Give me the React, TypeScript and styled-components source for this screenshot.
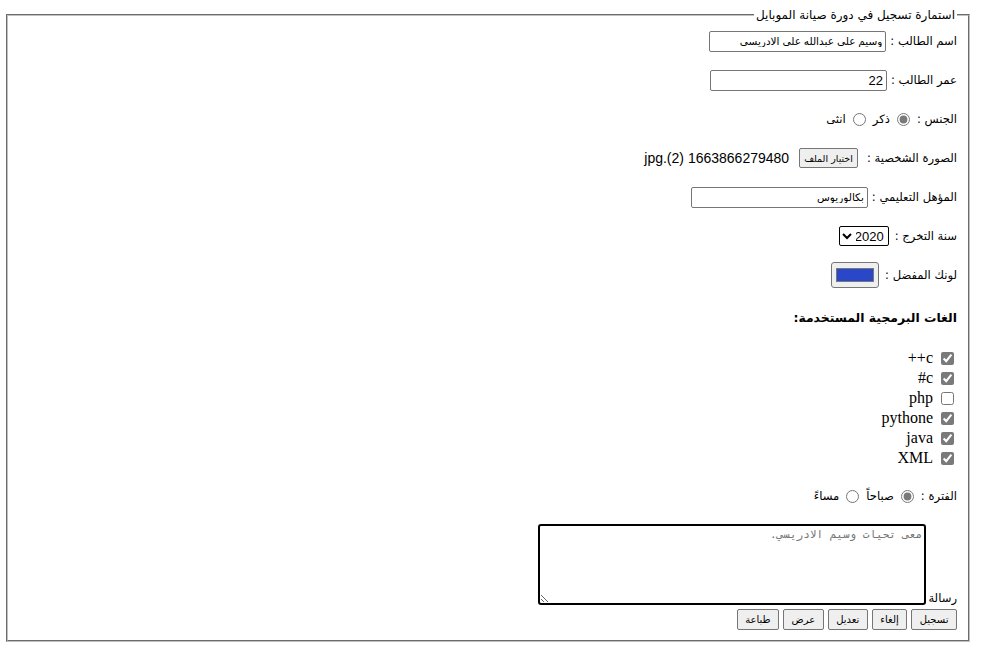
import React from "react";
import styled, { createGlobalStyle } from "styled-components";

const Global = createGlobalStyle`
  html, body { margin: 0; padding: 0; background: #fff; }
  body { font-family: "Liberation Sans", "DejaVu Sans", sans-serif; color: #000; }
`;

const Frame = styled.fieldset`
  direction: rtl;
  margin: 7px 12px 0 6px;
  padding: 7px 11px 10px 12px;
  border: 2px groove #c0c0c0;
  min-width: 0;
`;

const Legend = styled.legend`
  font-family: "DejaVu Sans", sans-serif;
  font-size: 12px;
  line-height: 16px;
  padding: 0 2px;
`;

const Form = styled.div`
  display: flex;
  flex-direction: column;
  gap: 17px;
`;

const Row = styled.div`
  display: flex;
  align-items: center;
  height: 22px;
  gap: 4px;
  font-size: 13px;
  white-space: nowrap;
`;

const Label = styled.span`
  font-family: "DejaVu Sans", sans-serif;
  font-size: 11.6px;
`;

const TextInput = styled.input<{ $small?: boolean }>`
  width: 177px;
  height: 21px;
  box-sizing: border-box;
  border: 1px solid #767676;
  border-radius: 2px;
  padding: 1px 3px;
  direction: rtl;
  font-family: "Liberation Sans", "DejaVu Sans", sans-serif;
  font-size: ${(p) => (p.$small ? 10.5 : 13)}px;
  color: #000;
  background: #fff;
`;

const Radio = styled.input.attrs({ type: "radio" })`
  width: 13px;
  height: 13px;
  margin: 0 3px;
  accent-color: #7a7a7a;
`;

const FakeButton = styled.button`
  height: 20px;
  box-sizing: border-box;
  padding: 0 4px;
  margin-right: 5px;
  border: 1px solid #767676;
  border-radius: 2px;
  background: #efefef;
  font-family: "DejaVu Sans", sans-serif;
  font-size: 9.5px;
  color: #000;
`;

const FileName = styled.span`
  font-size: 14px;
  margin-right: 6px;
`;

const Select = styled.select`
  width: 50px;
  height: 20px;
  margin-right: 2px;
  font-family: "Liberation Sans", sans-serif;
  font-size: 13px;
  border: 1px solid #000;
  border-radius: 2px;
  background: #fff;
  color: #000;
`;

const ColorInput = styled.input.attrs({ type: "color" })`
  width: 48px;
  height: 26px;
  margin-right: 2px;
  box-sizing: border-box;
  padding: 1px 2px;
  border: 1px solid #767676;
  border-radius: 3px;
  background: #efefef;
`;

const Heading = styled.h4`
  margin: 0;
  height: 28px;
  display: flex;
  align-items: center;
  font-family: "DejaVu Sans", sans-serif;
  font-size: 12.4px;
  font-weight: bold;
`;

const CheckList = styled.div`
  display: flex;
  flex-direction: column;
`;

const CheckRow = styled.label`
  display: flex;
  align-items: center;
  height: 20px;
  gap: 8px;
  font-family: "Liberation Serif", serif;
  font-size: 16px;
  padding-right: 3px;
`;

const Check = styled.input.attrs({ type: "checkbox" })`
  width: 13px;
  height: 13px;
  margin: 0;
  accent-color: #7a7a7a;
`;

const MessageBlock = styled.div`
  display: flex;
  flex-direction: column;
  gap: 4px;
`;

const MessageRow = styled.div`
  display: flex;
  align-items: flex-end;
  gap: 2px;
`;

const TextArea = styled.textarea`
  width: 388px;
  height: 81px;
  box-sizing: border-box;
  border: 2px solid #000;
  border-radius: 3px;
  padding: 2px;
  direction: rtl;
  font-family: "DejaVu Sans Mono", monospace;
  font-size: 11px;
  outline: none;
  &::placeholder { color: #757575; }
`;

const Actions = styled.div`
  display: flex;
  gap: 4px;
`;

const ActionButton = styled.button`
  height: 21px;
  box-sizing: border-box;
  padding: 0 7.5px;
  border: 1px solid #767676;
  border-radius: 2px;
  background: #efefef;
  font-family: "DejaVu Sans", sans-serif;
  font-size: 10px;
  color: #000;
`;

const languages = [
  { name: "c++", checked: true },
  { name: "c#", checked: true },
  { name: "php", checked: false },
  { name: "pythone", checked: true },
  { name: "java", checked: true },
  { name: "XML", checked: true },
];

export default function App() {
  return (
    <>
      <Global />
      <Frame>
        <Legend>استمارة تسجيل في دورة صيانة الموبايل</Legend>
        <Form>
          <Row>
            <Label>اسم الطالب :</Label>
            <TextInput $small defaultValue="وسيم علي عبدالله علي الادريسي" />
          </Row>
          <Row>
            <Label>عمر الطالب :</Label>
            <TextInput defaultValue="22" />
          </Row>
          <Row>
            <Label>الجنس :</Label>
            <Radio name="g" defaultChecked />
            <Label>ذكر</Label>
            <Radio name="g" />
            <Label>انثى</Label>
          </Row>
          <Row>
            <Label>الصورة الشخصية :</Label>
            <FakeButton type="button">اختيار الملف</FakeButton>
            <FileName>1663866279480 (2).jpg</FileName>
          </Row>
          <Row>
            <Label>المؤهل التعليمي :</Label>
            <TextInput $small defaultValue="بكالوريوس" />
          </Row>
          <Row>
            <Label>سنة التخرج :</Label>
            <Select defaultValue="2020">
              <option>2019</option>
              <option>2020</option>
              <option>2021</option>
            </Select>
          </Row>
          <Row>
            <Label>لونك المفضل :</Label>
            <ColorInput defaultValue="#2b47c9" />
          </Row>
          <Heading>الغات البرمجية المستخدمة:</Heading>
          <CheckList>
            {languages.map((l) => (
              <CheckRow key={l.name}>
                <Check defaultChecked={l.checked} />
                <span>{l.name}</span>
              </CheckRow>
            ))}
          </CheckList>
          <Row>
            <Label>الفترة :</Label>
            <Radio name="p" defaultChecked />
            <Label>صباحاً</Label>
            <Radio name="p" />
            <Label>مساءً</Label>
          </Row>
          <MessageBlock>
            <MessageRow>
              <Label>رسالة</Label>
              <TextArea placeholder="معى تحيات وسيم الادريسي." />
            </MessageRow>
            <Actions>
              <ActionButton type="button">تسجيل</ActionButton>
              <ActionButton type="button">إلغاء</ActionButton>
              <ActionButton type="button">تعديل</ActionButton>
              <ActionButton type="button">عرض</ActionButton>
              <ActionButton type="button">طباعة</ActionButton>
            </Actions>
          </MessageBlock>
        </Form>
      </Frame>
    </>
  );
}
